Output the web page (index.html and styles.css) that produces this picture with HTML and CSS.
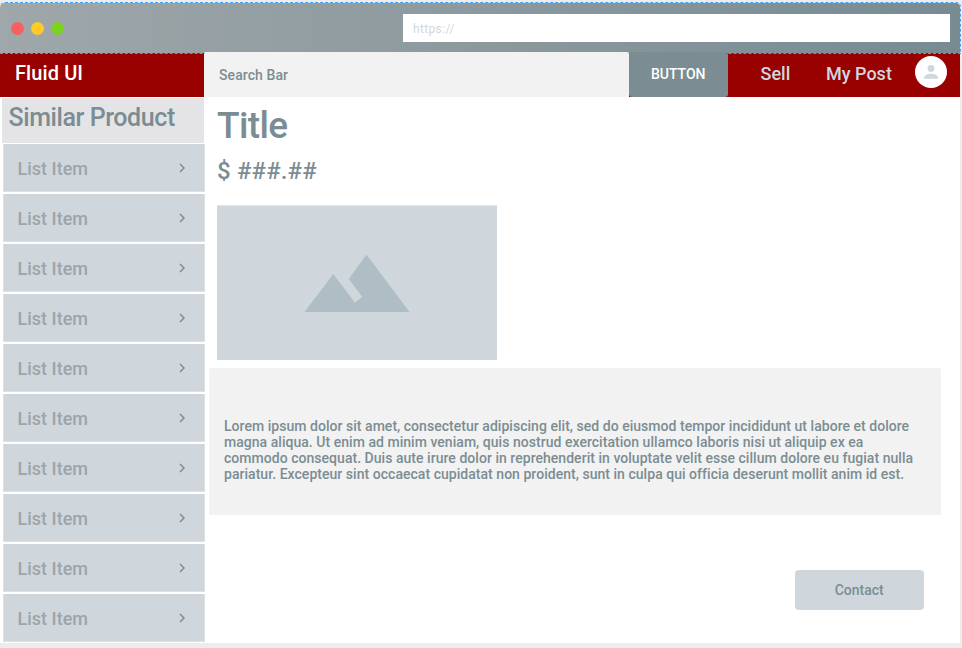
FILE: index.html
```html
<!DOCTYPE html>
<html lang="en">
<head>
<meta charset="utf-8">
<title>Fluid UI</title>
<link rel="stylesheet" href="styles.css">
</head>
<body>
<div class="window">
  <div class="chrome">
    <div class="lights"><i class="red"></i><i class="yellow"></i><i class="green"></i></div>
    <div class="address">https://</div>
  </div>
  <header class="nav">
    <div class="brand">Fluid UI</div>
    <div class="search">Search Bar</div>
    <div class="button">BUTTON</div>
    <div class="link sell">Sell</div>
    <div class="link post">My Post</div>
    <svg class="avatar" viewBox="0 0 32 32"><circle cx="16" cy="16" r="16" fill="#fff"/><circle cx="16" cy="12.5" r="3.4" fill="#cfd8dd"/><path d="M9 22.8v-1.2c0-2.6 4.2-3.9 7-3.9s7 1.3 7 3.9v1.2z" fill="#cfd8dd"/></svg>
  </header>
  <div class="page">
    <aside class="side">
      <h2 class="side-title">Similar Product</h2>
      <ul class="list">
        <li><span>List Item</span><svg viewBox="0 0 6 10"><path d="M1 1l4 4-4 4"/></svg></li>
        <li><span>List Item</span><svg viewBox="0 0 6 10"><path d="M1 1l4 4-4 4"/></svg></li>
        <li><span>List Item</span><svg viewBox="0 0 6 10"><path d="M1 1l4 4-4 4"/></svg></li>
        <li><span>List Item</span><svg viewBox="0 0 6 10"><path d="M1 1l4 4-4 4"/></svg></li>
        <li><span>List Item</span><svg viewBox="0 0 6 10"><path d="M1 1l4 4-4 4"/></svg></li>
        <li><span>List Item</span><svg viewBox="0 0 6 10"><path d="M1 1l4 4-4 4"/></svg></li>
        <li><span>List Item</span><svg viewBox="0 0 6 10"><path d="M1 1l4 4-4 4"/></svg></li>
        <li><span>List Item</span><svg viewBox="0 0 6 10"><path d="M1 1l4 4-4 4"/></svg></li>
        <li><span>List Item</span><svg viewBox="0 0 6 10"><path d="M1 1l4 4-4 4"/></svg></li>
        <li><span>List Item</span><svg viewBox="0 0 6 10"><path d="M1 1l4 4-4 4"/></svg></li>
      </ul>
    </aside>
    <main class="main">
      <h1 class="title">Title</h1>
      <div class="price">$ ###.##</div>
      <div class="photo"><svg viewBox="0 0 280 154"><path d="M87.5 106L116.3 68l21.5 28.5 7.5-5.5-13.5-18 17.7-24.5L192.5 106z" fill="#afbec5"/></svg></div>
      <p class="desc">Lorem ipsum dolor sit amet, consectetur adipiscing elit, sed do eiusmod tempor incididunt ut labore et dolore<br>magna aliqua. Ut enim ad minim veniam, quis nostrud exercitation ullamco laboris nisi ut aliquip ex ea<br>commodo consequat. Duis aute irure dolor in reprehenderit in voluptate velit esse cillum dolore eu fugiat nulla<br>pariatur. Excepteur sint occaecat cupidatat non proident, sunt in culpa qui officia deserunt mollit anim id est.</p>
      <div class="contact">Contact</div>
    </main>
  </div>
</div>
</body>
</html>
```
FILE: styles.css
```css
* { box-sizing: border-box; }
body {
  margin: 0;
  padding-top: 2px;
  height: 648px;
  overflow: hidden;
  background: #ededed;
  font-family: Roboto, "Liberation Sans", sans-serif;
  font-weight: 500;
  color: #7b8d93;
  white-space: nowrap;
}
.window { width: 961px; height: 641px; }
.chrome {
  position: relative;
  z-index: 1;
  height: 52px;
  border: 1px dashed #3fa2f7;
  border-left: 0;
  border-radius: 5px 5px 0 0;
  background: linear-gradient(90deg, #9fa7aa, #788b91) padding-box;
  display: flex;
  align-items: center;
  justify-content: space-between;
  padding: 0 10px 0 11px;
}
.lights { display: flex; gap: 7px; }
.lights i { width: 13px; height: 13px; border-radius: 50%; }
.red { background: #f95f5f; }
.yellow { background: #ffca28; }
.green { background: #7dd321; }
.address {
  width: 547px;
  height: 28px;
  background: #fff;
  color: #cfd8dd;
  font-size: 12px;
  font-weight: 400;
  letter-spacing: 0.35px;
  line-height: 30px;
  padding-left: 10px;
}
.nav {
  width: 960px;
  height: 44px;
  margin-top: -1px;
  background: #900;
  display: flex;
}
.brand {
  width: 204px;
  padding-left: 15px;
  color: #fff;
  font-size: 20px;
  line-height: 40px;
  letter-spacing: 0.1px;
}
.search {
  position: relative;
  z-index: 2;
  width: 424.5px;
  height: 45px;
  margin-top: -1px;
  padding-left: 15px;
  background: #f2f2f2;
  border-radius: 2px 2px 0 0;
  font-size: 14px;
  letter-spacing: 0.08px;
  line-height: 47px;
}
.button {
  position: relative;
  z-index: 2;
  width: 99.5px;
  height: 45px;
  margin-top: -1px;
  background: #7b8d93;
  border-radius: 3px;
  color: #fff;
  font-size: 14px;
  line-height: 45px;
  text-align: center;
}
.link { color: #cfd8dd; font-size: 18px; line-height: 42px; }
.sell { margin-left: 32.5px; width: 65.5px; }
.post { width: 89px; }
.avatar { width: 32px; height: 32px; margin-top: 3px; }
.page { display: flex; width: 960px; height: 546px; background: #fff; }
.side { width: 205px; padding-left: 2px; }
.side-title {
  margin: 1px 1px 0 0;
  height: 45px;
  padding-left: 6.5px;
  background: #e4e4e6;
  font-size: 25px;
  font-weight: 500;
  letter-spacing: -0.42px;
  line-height: 39px;
}
.list { list-style: none; margin: 1px 0 0 1px; padding: 0; display: grid; gap: 2px; }
.list li {
  height: 48px;
  padding: 0 19.5px 0 13.5px;
  background: #cfd7dd;
  border: 1px solid #dce3e6;
  border-width: 0 1px 1px 1px;
  display: flex;
  align-items: center;
  justify-content: space-between;
  color: #9ca5a7;
  font-size: 18px;
}
.list span { padding-top: 2px; }
.list svg { width: 6px; height: 10px; fill: none; stroke: #858b8d; stroke-width: 1.5; }
.main { width: 755px; padding-left: 12px; }
.title { margin: 7px 0 0; font-size: 37px; font-weight: 500; letter-spacing: -0.6px; line-height: 44px; }
.price { margin-top: 8px; font-size: 24px; letter-spacing: 0.15px; line-height: 30px; }
.photo {
  width: 280px;
  height: 155px;
  margin-top: 19px;
  border-top: 1px solid #dfe5e8;
  background: #cfd7dd;
}
.photo svg { display: block; width: 280px; height: 154px; }
.desc {
  width: 732px;
  height: 147px;
  margin: 8px 0 0 -8px;
  padding: 50px 15px 0;
  background: #f2f2f2;
  border-radius: 2px;
  font-size: 14px;
  letter-spacing: 0.035px;
  line-height: 16px;
}
.contact {
  width: 129.5px;
  height: 40px;
  margin: 55px 0 0 577.5px;
  background: #cfd7dd;
  border-radius: 4px;
  font-size: 14px;
  line-height: 40px;
  text-align: center;
}
```
